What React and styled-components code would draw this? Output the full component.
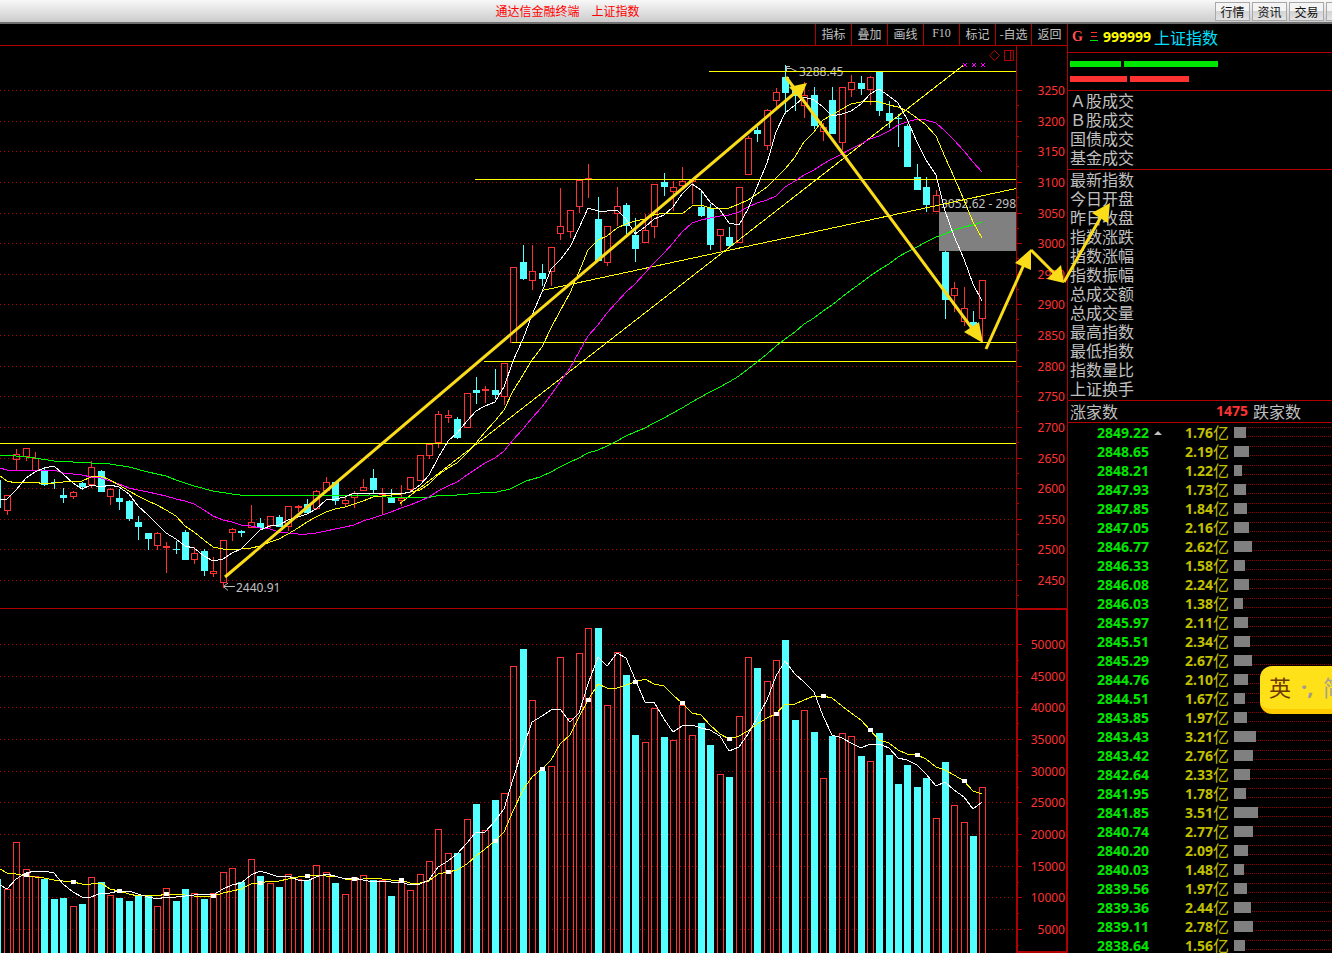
import React from 'react';
import styled, { createGlobalStyle } from 'styled-components';

const UP = '#ff3232';
const DOWN = '#54ffff';
const FRAME = '#b00000';
const YELLOW = '#ffff00';
const ARROW = '#fadc18';

// [direction, high, bodyTop, bodyBottom, low, volumeTop]
const bars = [
  ['u', 495, 495, 510, 514, 889], ['u', 449, 454, 459, 470, 842], ['u', 448, 448, 456, 460, 869],
  ['u', 452, 458, 470, 470, 876], ['d', 467, 470, 485, 486, 879], ['d', 479, 482, 483, 489, 899],
  ['d', 488, 495, 498, 503, 898], ['u', 491, 492, 496, 498, 906], ['d', 482, 483, 487, 490, 904],
  ['u', 461, 467, 484, 487, 877], ['d', 470, 471, 492, 492, 882], ['u', 488, 489, 496, 504, 895],
  ['d', 489, 498, 502, 510, 898], ['d', 500, 501, 519, 521, 901], ['d', 516, 522, 527, 540, 896],
  ['d', 533, 533, 539, 550, 896], ['u', 532, 533, 545, 549, 906], ['u', 542, 546, 547, 572, 888],
  ['d', 541, 549, 550, 554, 901], ['d', 530, 532, 560, 560, 889], ['u', 547, 553, 559, 563, 893],
  ['d', 549, 551, 571, 576, 899], ['u', 557, 571, 573, 576, 893], ['u', 540, 540, 582, 587, 872],
  ['u', 528, 529, 532, 540, 868], ['d', 530, 531, 533, 537, 882], ['u', 505, 522, 527, 527, 859],
  ['d', 518, 523, 528, 528, 876], ['u', 516, 516, 525, 527, 883], ['d', 515, 517, 527, 527, 887],
  ['u', 506, 506, 526, 530, 874], ['u', 505, 506, 507, 511, 879], ['d', 499, 504, 513, 514, 880],
  ['u', 490, 491, 508, 509, 865], ['u', 477, 482, 490, 490, 872], ['d', 482, 482, 501, 505, 883],
  ['u', 497, 500, 503, 505, 894], ['u', 491, 493, 497, 507, 877], ['u', 479, 487, 490, 490, 875],
  ['d', 469, 478, 490, 494, 880], ['u', 488, 493, 494, 513, 880], ['d', 489, 497, 503, 503, 896],
  ['u', 485, 498, 500, 505, 881], ['u', 477, 477, 489, 492, 890], ['u', 455, 455, 480, 480, 874],
  ['u', 444, 444, 455, 458, 861], ['u', 411, 414, 442, 447, 829], ['u', 410, 415, 417, 422, 853],
  ['d', 417, 419, 438, 439, 853], ['u', 393, 393, 427, 427, 819], ['d', 377, 390, 393, 404, 804],
  ['u', 386, 389, 390, 402, 830], ['d', 369, 390, 395, 399, 800], ['u', 363, 363, 396, 404, 793],
  ['u', 267, 267, 342, 342, 666], ['d', 245, 262, 279, 280, 649], ['u', 245, 271, 280, 289, 700],
  ['d', 264, 273, 279, 286, 771], ['u', 247, 247, 271, 285, 766], ['u', 188, 226, 233, 239, 657],
  ['u', 210, 210, 231, 237, 718], ['u', 180, 180, 206, 212, 653], ['u', 164, 178, 179, 197, 628],
  ['d', 197, 219, 261, 261, 628], ['u', 226, 226, 262, 265, 705], ['u', 187, 206, 213, 225, 652],
  ['d', 203, 205, 226, 234, 675], ['d', 218, 235, 249, 262, 735], ['u', 214, 230, 242, 242, 742],
  ['u', 184, 184, 226, 237, 708], ['d', 173, 182, 187, 196, 737], ['u', 181, 187, 191, 210, 740],
  ['u', 167, 181, 185, 187, 705], ['u', 179, 179, 181, 203, 735], ['d', 190, 207, 216, 217, 723],
  ['d', 204, 208, 245, 250, 745], ['u', 229, 229, 235, 250, 774], ['d', 227, 237, 246, 247, 777],
  ['u', 187, 187, 242, 242, 716], ['u', 136, 138, 174, 174, 657], ['d', 127, 130, 134, 142, 668],
  ['u', 109, 110, 145, 149, 681], ['u', 88, 92, 100, 106, 660], ['d', 65, 77, 93, 114, 640],
  ['d', 88, 90, 96, 111, 720], ['u', 82, 95, 105, 117, 710], ['d', 87, 95, 126, 129, 732],
  ['u', 123, 127, 131, 140, 778], ['d', 87, 100, 134, 134, 736], ['u', 87, 87, 142, 149, 733],
  ['u', 75, 82, 89, 96, 736], ['d', 76, 83, 89, 95, 756], ['u', 76, 77, 89, 104, 761],
  ['d', 71, 71, 111, 116, 733], ['d', 101, 113, 121, 128, 755], ['d', 114, 118, 119, 147, 784],
  ['d', 124, 126, 167, 167, 765], ['d', 164, 177, 190, 190, 787], ['d', 177, 187, 205, 212, 778],
  ['u', 190, 195, 211, 211, 818], ['d', 251, 252, 300, 319, 762], ['u', 282, 288, 295, 311, 805],
  ['u', 287, 308, 321, 325, 822], ['d', 311, 322, 329, 329, 836], ['u', 280, 280, 318, 342, 787],
];

const barX = (i) => Math.floor(7.36 + 9.381 * i);
const closes = bars.map(([dir, , top, bottom]) => (dir === 'u' ? top : bottom));
const volumes = bars.map((bar) => bar[5]);

// lead holds the points before the first full window
const averagePoints = (values, size, lead) => {
  const points = [...lead];
  for (let i = size - 1; i < values.length; i++) {
    const sum = values.slice(i - size + 1, i + 1).reduce((a, b) => a + b, 0);
    points.push([barX(i), Math.round(sum / size)]);
  }
  return points.map((p) => p.join(',')).join(' ');
};

const averages = [
  {
    color: '#00ff00',
    points: averagePoints(closes, 60, [
      [0, 455], [16, 456], [35, 458], [54, 461], [73, 462], [91, 463], [110, 464], [129, 467], [148, 472],
      [166, 476], [176, 480], [194, 486], [213, 491], [232, 494], [240, 495], [290, 495], [304, 496],
      [370, 495], [386, 497], [425, 498], [436, 496], [457, 495], [480, 493], [497, 492], [510, 489],
      [526, 481], [540, 477], [551, 472],
    ]),
  },
  {
    color: '#ff00ff',
    points: averagePoints(closes, 20, [
      [0, 468], [7, 470], [54, 470], [63, 473], [82, 475], [91, 477], [101, 478], [110, 481], [119, 484],
      [129, 488], [138, 490], [148, 492], [157, 494], [166, 496], [176, 499],
    ]),
  },
  {
    color: YELLOW,
    points: averagePoints(closes, 10, [
      [0, 476], [7, 481], [16, 483], [35, 482], [44, 484], [54, 483], [63, 482], [82, 481],
    ]),
  },
  {
    color: '#ffffff',
    points: averagePoints(closes, 5, [[0, 500], [7, 499], [16, 490], [26, 478], [35, 472]]),
  },
  {
    color: YELLOW,
    points: averagePoints(volumes, 10, [
      [0, 869], [7, 873], [16, 874], [26, 876], [35, 877], [44, 878], [54, 880], [63, 881], [73, 882], [82, 884],
    ]),
  },
  {
    color: '#ffffff',
    points: averagePoints(volumes, 5, [[0, 885], [7, 889], [16, 879], [26, 873], [35, 871]]),
  },
];

const volumeMarks = [[26, 875], [73, 882]];
for (let i = 12; i < bars.length; i += 5) {
  const sum = volumes.slice(i - 9, i + 1).reduce((a, b) => a + b, 0);
  volumeMarks.push([barX(i), Math.round(sum / 10)]);
}

const priceTicks = Array.from({ length: 17 }, (_, i) => ({
  label: 3250 - i * 50,
  y: Math.round(90 + i * 30.625),
}));

const volumeTicks = Array.from({ length: 10 }, (_, i) => ({
  label: 50000 - i * 5000,
  y: Math.round(644 + i * 31.66),
}));

const supportLines = [
  [709, 71, 1016, 71], [475, 179, 1016, 179], [512, 342, 1016, 342], [484, 361, 1016, 361],
  [0, 443, 1016, 443], [542, 290, 1016, 188], [400, 503, 963, 65],
];

const arrows = [
  { line: [225, 577, 796, 92], head: '807,83 789,87 800,99' },
  { line: [786, 77, 974, 331], head: '983,343 964,332 979,322' },
  { line: [986, 349, 1026, 260], head: '1031,249 1015,263 1031,270' },
  { line: [1031, 250, 1056, 275], head: '1064,283 1061,265 1047,279' },
  { line: [1064, 282, 1102, 215], head: '1110,203 1092,213 1108,223' },
];

const tools = ['指标', '叠加', '画线', 'F10', '标记', '-自选', '返回'];
const windowButtons = ['行情', '资讯', '交易'];
const turnoverLabels = ['Ａ股成交', 'Ｂ股成交', '国债成交', '基金成交'];
const indexLabels = [
  '最新指数', '今日开盘', '昨日收盘', '指数涨跌', '指数涨幅', '指数振幅',
  '总成交额', '总成交量', '最高指数', '最低指数', '指数量比', '上证换手',
];

const ticks = [
  ['2849.22', '1.76'], ['2848.65', '2.19'], ['2848.21', '1.22'], ['2847.93', '1.73'], ['2847.85', '1.84'],
  ['2847.05', '2.16'], ['2846.77', '2.62'], ['2846.33', '1.58'], ['2846.08', '2.24'], ['2846.03', '1.38'],
  ['2845.97', '2.11'], ['2845.51', '2.34'], ['2845.29', '2.67'], ['2844.76', '2.10'], ['2844.51', '1.67'],
  ['2843.85', '1.97'], ['2843.43', '3.21'], ['2843.42', '2.76'], ['2842.64', '2.33'], ['2841.95', '1.78'],
  ['2841.85', '3.51'], ['2840.74', '2.77'], ['2840.20', '2.09'], ['2840.03', '1.48'], ['2839.56', '1.97'],
  ['2839.36', '2.44'], ['2839.11', '2.78'], ['2838.64', '1.56'],
];

const Axis = ({ items, minor }) => (
  <g>
    {items.map(({ label, y }) => (
      <g key={label}>
        <GridLine x1="0" y1={y + 0.5} x2="1016" y2={y + 0.5} />
        <FrameLine x1="1017" y1={y + 0.5} x2="1022" y2={y + 0.5} />
        <FrameLine x1="1017" y1={y + minor + 0.5} x2="1019" y2={y + minor + 0.5} />
        <AxisText x="1065" y={y + 5}>{label}</AxisText>
      </g>
    ))}
  </g>
);

const Candle = ({ x, bar }) => {
  const [dir, high, top, bottom, low, volume] = bar;
  if (dir === 'd') {
    return (
      <g fill={DOWN}>
        <rect x={x} y={high} width="1" height={low - high} />
        <rect x={x - 3} y={top} width="7" height={bottom - top} />
        <rect x={x - 3} y={volume} width="7" height={960 - volume} />
      </g>
    );
  }
  return (
    <g fill="none" stroke={UP}>
      <path d={`M${x + 0.5} ${high}V${top}M${x + 0.5} ${bottom}V${low + 1}`} />
      <rect x={x - 2.5} y={top + 0.5} width="6" height={bottom - top} />
      <rect x={x - 2.5} y={volume + 0.5} width="6" height={960 - volume} />
    </g>
  );
};

const Chart = () => (
  <ChartSvg viewBox="0 46 1067 907" role="img" aria-label="上证指数 K线图">
    <Axis items={priceTicks} minor={15} />
    <Axis items={volumeTicks} minor={16} />
    <FrameLine x1="0" y1="608.5" x2="1067" y2="608.5" />
    <FrameLine x1="1016.5" y1="46" x2="1016.5" y2="608" />
    <rect x="1017" y="609" width="50" height="343" fill="none" stroke={FRAME} strokeWidth="2" shapeRendering="crispEdges" />

    <g fill="none" stroke={FRAME}>
      <path d="M994.5 50.5l5 5-5 5-5-5z" />
      <path d="M1004.5 50.5h9v10h-9zM1010.5 50.5v10" shapeRendering="crispEdges" />
    </g>

    <ChartText x="799" y="76">3288.45</ChartText>
    <ChartText x="236" y="592">2440.91</ChartText>
    <g fill="none" stroke="#c0c0c0">
      <path d="M786.5 71v-5M786 66.5h4M787 68.5h4l6 3M223 586.5h12M228 583l-4.5 3.5 4.5 4" />
    </g>

    <g shapeRendering="crispEdges">
      <rect x="-5" y="480" width="6" height="28" fill={DOWN} />
      <rect x="-5" y="879" width="6" height="81" fill={DOWN} />
      {bars.map((bar, i) => <Candle key={i} x={barX(i)} bar={bar} />)}
    </g>

    <rect x="939" y="212" width="77" height="39" fill="#808080" />
    <ChartText x="941" y="208">3052.62 - 298</ChartText>

    {supportLines.map(([x1, y1, x2, y2]) => (
      <SupportLine key={`${x1}-${y1}`} x1={x1} y1={y1 + 0.5} x2={x2} y2={y2 + 0.5} />
    ))}
    {averages.map(({ color, points }, i) => <Average key={i} stroke={color} points={points} />)}
    {volumeMarks.map(([x, y]) => (
      <rect key={x} x={x - 2} y={y - 2} width="5" height="4" fill="#fff" />
    ))}
    <path d="M963 63l4 4m0-4l-4 4M972 63l4 4m0-4l-4 4M981 63l4 4m0-4l-4 4" stroke="#ff00ff" />

    {arrows.map(({ line: [x1, y1, x2, y2], head }) => (
      <g key={head}>
        <line x1={x1} y1={y1} x2={x2} y2={y2} stroke={ARROW} strokeWidth="3" />
        <polygon points={head} fill={ARROW} />
      </g>
    ))}
  </ChartSvg>
);

const QuotePanel = () => (
  <Panel>
    <PanelHeader>
      <Group>G</Group>
      <svg width="8" height="10" viewBox="0 0 8 10" shapeRendering="crispEdges">
        <path d="M1 .5h6M1 4.5h6" stroke={UP} />
        <path d="M0 8.5h8" stroke="#00e600" />
      </svg>
      <Code>999999</Code>
      <IndexName>上证指数</IndexName>
    </PanelHeader>
    <Breadth>
      <BreadthRow>
        <BreadthBar $color="#00e600" $width={51} />
        <BreadthBar $color="#00e600" $width={94} />
      </BreadthRow>
      <BreadthRow>
        <BreadthBar $color={UP} $width={57} />
        <BreadthBar $color={UP} $width={59} />
      </BreadthRow>
    </Breadth>
    <LabelList>
      {turnoverLabels.map((label) => <li key={label}>{label}</li>)}
    </LabelList>
    <LabelList>
      {indexLabels.map((label) => <li key={label}>{label}</li>)}
    </LabelList>
    <CountRow>
      <Rising>涨家数<CountValue>1475</CountValue></Rising>
      <span>跌家数</span>
    </CountRow>
    <TickTable>
      <tbody>
        {ticks.map(([price, volume], i) => (
          <tr key={price}>
            <PriceCell>{price}{i === 0 && <Triangle />}</PriceCell>
            <VolumeCell>{volume}<Unit>亿</Unit></VolumeCell>
            <BarCell>
              <Track>
                <Fill style={{ width: Math.round(volume * 6.85) }} />
              </Track>
            </BarCell>
          </tr>
        ))}
      </tbody>
    </TickTable>
  </Panel>
);

const App = () => (
  <Page>
    <GlobalStyle />
    <TitleBar>
      <Title>通达信金融终端　上证指数</Title>
      <WindowButtons>
        {windowButtons.map((label) => <WindowButton key={label}>{label}</WindowButton>)}
        <WindowButton aria-label="更多" />
      </WindowButtons>
    </TitleBar>
    <Workspace>
      <ChartColumn>
        <Toolbar>
          {tools.map((label) => <ToolButton key={label} $serif={label === 'F10'}>{label}</ToolButton>)}
        </Toolbar>
        <Chart />
      </ChartColumn>
      <QuotePanel />
    </Workspace>
    <InputBadge>
      <span>英</span>
      <Punctuation>·,</Punctuation>
      <Simplified>简</Simplified>
    </InputBadge>
  </Page>
);

export default App;

const GlobalStyle = createGlobalStyle`
  * {
    box-sizing: border-box;
  }

  body {
    margin: 0;
    background: #000;
    font-family: "Noto Sans", "Noto Sans CJK SC", sans-serif;
  }
`;

const Page = styled.div`
  position: relative;
  display: flex;
  flex-direction: column;
  height: 100vh;
  overflow: hidden;
  background: #000;
  color: #c0c0c0;
`;

const TitleBar = styled.header`
  display: flex;
  flex: none;
  height: 24px;
  background: linear-gradient(#f8f8f8, #cccccc);
  border-bottom: 2px solid #707070;
`;

const Title = styled.h1`
  flex: 1;
  margin: 0;
  padding-right: 80px;
  color: #ff0000;
  font-family: "Noto Sans CJK SC", sans-serif;
  font-size: 12px;
  font-weight: 400;
  line-height: 22px;
  text-align: center;
`;

const WindowButtons = styled.div`
  display: flex;
  gap: 2px;
  width: 117px;
  padding: 2px 0 1px;
  overflow: hidden;
`;

const WindowButton = styled.button`
  flex: none;
  width: 35px;
  padding: 0;
  border: 1px solid #a8a8a8;
  background: linear-gradient(#f4f4f4 50%, #d4d4d4 50%, #e4e4e4);
  color: #101010;
  font-family: "Noto Sans CJK SC", sans-serif;
  font-size: 12px;
  line-height: 16px;
`;

const Workspace = styled.main`
  display: flex;
  flex: 1;
  min-height: 0;
`;

const ChartColumn = styled.section`
  flex: 1;
  min-width: 0;
`;

const Toolbar = styled.nav`
  display: flex;
  justify-content: flex-end;
  height: 22px;
  border-bottom: 1px solid ${FRAME};
`;

const ToolButton = styled.button`
  width: 36px;
  padding: 0 0 2px;
  border: 0;
  border-left: 1px solid ${FRAME};
  background: none;
  color: #c0c0c0;
  font-family: ${({ $serif }) => ($serif ? '"Liberation Serif", serif' : '"Noto Sans CJK SC", sans-serif')};
  font-size: 12px;
  line-height: 19px;
  white-space: nowrap;
`;

const ChartSvg = styled.svg`
  position: relative;
  z-index: 1;
  display: block;
  width: 100%;
  overflow: visible;
  pointer-events: none;
`;

const GridLine = styled.line`
  stroke: ${FRAME};
  stroke-dasharray: 1 3;
  shape-rendering: crispEdges;
`;

const FrameLine = styled.line`
  stroke: ${FRAME};
  shape-rendering: crispEdges;
`;

const SupportLine = styled.line`
  stroke: ${YELLOW};
  shape-rendering: crispEdges;
`;

const Average = styled.polyline`
  fill: none;
  shape-rendering: crispEdges;
`;

const ChartText = styled.text`
  fill: #c0c0c0;
  font-size: 12px;
`;

const AxisText = styled.text`
  fill: ${UP};
  font-size: 12px;
  text-anchor: end;
`;

const Panel = styled.aside`
  flex: none;
  width: 265px;
  overflow: hidden;
  border-left: 1px solid ${FRAME};
  font-family: "Noto Sans CJK SC", sans-serif;
  font-size: 16px;
`;

const PanelHeader = styled.div`
  display: flex;
  align-items: center;
  gap: 6px;
  height: 29px;
  padding-left: 4px;
  border-bottom: 1px solid ${FRAME};
  line-height: 26px;
  padding-bottom: 2px;
`;

const Group = styled.span`
  width: 12px;
  color: #ff5050;
  font-family: "Liberation Serif", serif;
  font-size: 14px;
  font-weight: 700;
`;

const Code = styled.span`
  margin-left: -1px;
  color: ${YELLOW};
  font-family: "Noto Sans", sans-serif;
  font-size: 14px;
  font-weight: 700;
`;

const IndexName = styled.span`
  margin-left: -3px;
  color: #00e0ff;
`;

const Breadth = styled.div`
  display: flex;
  flex-direction: column;
  gap: 9px;
  height: 38px;
  padding: 8px 2px;
  border-bottom: 1px solid ${FRAME};
`;

const BreadthRow = styled.div`
  display: flex;
  gap: 3px;
`;

const BreadthBar = styled.div`
  width: ${({ $width }) => $width}px;
  height: 6px;
  background: ${({ $color }) => $color};
`;

const LabelList = styled.ul`
  margin: 0;
  padding: 0 2px 2px;
  border-bottom: 1px solid ${FRAME};
  line-height: 19px;
  list-style: none;
`;

const CountRow = styled.div`
  display: flex;
  gap: 5px;
  height: 22px;
  border-bottom: 1px solid ${FRAME};
  line-height: 20px;
`;

const Rising = styled.span`
  display: flex;
  justify-content: space-between;
  width: 180px;
  padding-left: 2px;
`;

const CountValue = styled.span`
  color: ${UP};
  font-family: "Noto Sans", sans-serif;
  font-size: 14px;
  font-weight: 700;
`;

const TickTable = styled.table`
  width: 100%;
  border-collapse: collapse;
  table-layout: fixed;
  font-family: "Noto Sans", sans-serif;
  font-size: 14px;
  font-weight: 700;
  line-height: 19px;

  td {
    height: 19px;
    padding: 0;
    white-space: nowrap;
  }
`;

const PriceCell = styled.td`
  width: 117px;
  color: #00e600;

  && {
    padding-left: 29px;
  }
`;

const Triangle = styled.span`
  display: inline-block;
  margin-left: 5px;
  border: 4px solid transparent;
  border-top: 0;
  border-bottom-color: #c0c0c0;
  vertical-align: 3px;
`;

const VolumeCell = styled.td`
  width: 49px;
  color: #c0c000;
`;

const Unit = styled.span`
  display: inline-block;
  height: 19px;
  font-family: "Noto Sans CJK SC", sans-serif;
  font-size: 16px;
  font-weight: 400;
  vertical-align: top;
`;

const BarCell = styled.td`
  vertical-align: top;
`;

const Track = styled.div`
  height: 10px;
  margin-top: 4px;
  background:
    repeating-linear-gradient(90deg, #900000 0 1px, transparent 1px 2px) top / 100% 1px no-repeat,
    repeating-linear-gradient(90deg, #900000 0 1px, transparent 1px 2px) bottom / 100% 1px no-repeat;
`;

const Fill = styled.div`
  height: 11px;
  background: #808080;
`;

const InputBadge = styled.div`
  position: absolute;
  z-index: 2;
  top: 666px;
  right: 0;
  display: flex;
  gap: 10px;
  width: 72px;
  height: 48px;
  padding-left: 9px;
  overflow: hidden;
  border-bottom: 5px solid #ffca00;
  border-radius: 12px 0 0 12px;
  background: #ffe11a;
  color: #6b3a00;
  font-family: "Noto Sans CJK SC", sans-serif;
  font-size: 22px;
  line-height: 41px;
  white-space: nowrap;

  span {
    flex: none;
  }
`;

const Punctuation = styled.span`
  width: 12px;
  color: #a09a90;
  font-family: "Noto Sans", sans-serif;
  font-weight: 700;
`;

const Simplified = styled.span`
  color: #a8a090;
`;
